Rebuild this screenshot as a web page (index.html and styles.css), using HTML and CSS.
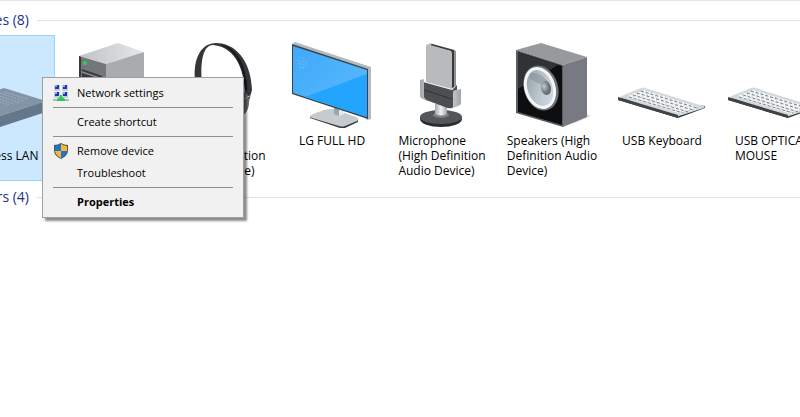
FILE: index.html
```
<!DOCTYPE html>
<html lang="en">
<head>
    <meta charset="UTF-8">
    <title>Devices and Printers</title>
    <link rel="stylesheet" href="styles.css">
</head>
<body>
    <main class="devices">
        <section class="group">
            <h2 class="group_title"><span>Devices (8)</span></h2>
            <ul class="device_list">
                <li class="device selected">
                    <svg viewBox="-51 36 106 96" aria-hidden="true">
                        <path fill="#8394a6" d="M4 88 46 101 0 116-42 103z"/>
                        <path fill="#65778a" d="M46 101v11L0 127v-11z"/>
                        <path fill="#596a7c" d="M-42 103 0 116v11l-42-13z"/>
                        <path stroke="#a0aebc" stroke-width="1" stroke-dasharray="2 1" d="M4 92l24 7M0 93l24 8M-3 95l23 8M-6 97l20 7M-9 99l18 6"/>
                    </svg>
                    <span class="device_name">USB<br>Wireless LAN</span>
                </li>
                <li class="device">
                    <svg viewBox="59 36 106 96" aria-hidden="true">
                        <defs>
                            <linearGradient id="caseTop" x1="0" x2="1"><stop offset="0" stop-color="#c0c1c3"/><stop offset="1" stop-color="#e6e7e8"/></linearGradient>
                        </defs>
                        <path fill="url(#caseTop)" d="M79 56 118 43 144 52 106 64z"/>
                        <path fill="#a9abad" d="M106 64 144 52v60l-38 14z"/>
                        <path fill="#74777a" d="M79 56l27 8v62l-27-10z"/>
                        <path fill="#37393c" d="M79 56l2 1v59l-2-1zM82 69l20 7v2l-20-7zM82 73l22 7v30l-22-8z"/>
                        <path stroke="#8a8c8e" d="M82 72l21 7"/>
                        <circle cx="85" cy="63" r="2" fill="#25d948"/>
                    </svg>
                    <span class="device_name">DESKTOP</span>
                </li>
                <li class="device">
                    <svg viewBox="169 36 106 96" aria-hidden="true">
                        <path fill="#34373a" d="M195 80C193 57 202 43 216 43c19 0 35 17 36 47l-3 11h-4c1-28-8-54-32-56-10 0-13 17-11 38z"/>
                        <path fill="#17191b" d="M219 45c15 3 25 20 26 45h2c0-25-11-45-28-45z"/>
                        <path fill="#6c6f72" d="M239 91c8-1 11 5 10 13-1 7-4 11-10 13z"/>
                        <path stroke="#c0c2c4" fill="none" d="M245 99c2-2 3-3 6-3"/>
                        <ellipse cx="199" cy="97" rx="6" ry="13" fill="#44474a"/>
                    </svg>
                    <span class="device_name">Headphone<br>(High Definition<br>Audio Device)</span>
                </li>
                <li class="device">
                    <svg viewBox="279 36 106 96" aria-hidden="true">
                        <defs>
                            <linearGradient id="screen" x1="0" y1="0" x2="1" y2="1"><stop offset="0" stop-color="#3fa9fa"/><stop offset="1" stop-color="#5dbafd"/></linearGradient>
                        </defs>
                        <path fill="#3b3f42" d="M310 116v2l30 10h5l13-6v-3z"/>
                        <path fill="#c6cbcf" d="M310 116q1-2 14-6 8-2 12 0l20 7q4 2 1 4l-12 5q-3 1-6 0l-27-8q-3-1-2-2z"/>
                        <path fill="#9fa4a8" d="M334 106h5v10l-5-2z"/>
                        <path fill="#e8e9ea" d="M339 108h5v6l-5 2z"/>
                        <path fill="#b3b9bc" d="M292 44l3-2 76 25v52l-4 1z"/>
                        <path fill="#35434e" d="M292 44l76 25v50l-76-25z"/>
                        <path fill="url(#screen)" d="M293 46l74 24v47l-74-24z"/>
                        <path fill="#23a5fd" d="M367 74v43l-62-20z"/>
                        <path stroke="#8fd0ff" stroke-width="1" stroke-dasharray="1 2" d="M299 57l6 2M297 60l10 3M298 63l9 3M300 67l5 1"/>
                    </svg>
                    <span class="device_name">LG FULL HD</span>
                </li>
                <li class="device">
                    <svg viewBox="389 36 106 96" aria-hidden="true">
                        <defs>
                            <linearGradient id="steel" x1="0" x2="1"><stop offset="0" stop-color="#a5a7a9"/><stop offset=".5" stop-color="#f1f2f2"/><stop offset="1" stop-color="#a2a4a6"/></linearGradient>
                        </defs>
                        <ellipse cx="441" cy="119" rx="21" ry="8" fill="#292c2e"/>
                        <ellipse cx="441" cy="117" rx="21" ry="7" fill="#53575a"/>
                        <ellipse cx="441" cy="115" rx="8" ry="3" fill="#7d8082"/>
                        <path fill="url(#steel)" d="M435 104h12v10q-6 3-12 0z"/>
                        <path fill="#c9cbcd" d="M426 45l4-2 25 7v5h-3z"/>
                        <path fill="#373a3c" d="M430 45l2-1 22 6v37l-3 2V51z"/>
                        <path fill="#8f9294" d="M454 50l2 1v35l-2 1z"/>
                        <path fill="#b8babc" d="M426 46q0-2 2-1l23 6q1 1 1 3v35l-26-7z"/>
                        <path fill="#4b4f52" d="M423 82l29 8 5-5v19l-5 4q-3 1-7-1l-19-7q-3-1-3-4z"/>
                        <path stroke="#303336" fill="none" d="M424 90l28 9"/>
                        <path fill="url(#steel)" d="M420 80l4-1v18l3 4-6-3q-1-1-1-4zM453 92q0-2 3-2l5-1v14q0 2-3 3l-5 2z"/>
                    </svg>
                    <span class="device_name">Microphone<br>(High Definition<br>Audio Device)</span>
                </li>
                <li class="device">
                    <svg viewBox="499 36 106 96" aria-hidden="true">
                        <defs>
                            <linearGradient id="cone" x1="0" y1="0" x2="1" y2="1"><stop offset="0" stop-color="#8c979f"/><stop offset=".5" stop-color="#b9c4cb"/><stop offset="1" stop-color="#dce3e8"/></linearGradient>
                            <radialGradient id="cap" cx=".35" cy=".35"><stop offset="0" stop-color="#c3ccd3"/><stop offset="1" stop-color="#657078"/></radialGradient>
                        </defs>
                        <path fill="#e3e3e4" d="M587 113l4 3-20 9z"/>
                        <path fill="#97999d" d="M516 50 541 43 587 57 563 65z"/>
                        <path fill="#777a82" d="M563 65 587 57v60l-24 10z"/>
                        <path fill="#5a5d62" d="M516 50l47 15v62l-47-14z"/>
                        <path fill="#0d0e10" d="M518 52l44 14v59l-44-13z"/>
                        <path fill="#303235" d="M518 52l40 13-40 24z"/>
                        <ellipse cx="541" cy="88" rx="17" ry="23" fill="#6e7276" transform="rotate(-18 541 88)"/>
                        <ellipse cx="540" cy="88" rx="14" ry="20" fill="url(#cone)" stroke="#f3f5f6" stroke-width="3" transform="rotate(-18 540 88)"/>
                        <path fill="#7f8b94" opacity=".5" d="M530 73q10-2 19 10l-7 2-12-6z"/>
                        <ellipse cx="546" cy="88" rx="5" ry="7" fill="url(#cap)" transform="rotate(-14 546 88)"/>
                    </svg>
                    <span class="device_name">Speakers (High<br>Definition Audio<br>Device)</span>
                </li>
                <li class="device">
                    <svg viewBox="609 36 106 96" aria-hidden="true">
                        <g id="keyboard">
                            <path fill="#2f3437" d="M618 98v2l60 18 27-10v-2z"/>
                            <path fill="#d3d8db" d="M619 97l22-9q2-1 4 0l58 18q3 1 1 2l-25 8q-2 1-4 0z"/>
                            <path fill="#3d4347" d="M618 97l60 18v3l-60-18z"/>
                            <path stroke="#f5f6f7" stroke-width="3" stroke-dasharray="4 1" d="M642 91l54 17M638 93l54 17M633 94l54 17M629 96l54 17"/>
                            <path stroke="#777e84" stroke-width="1" stroke-dasharray="3 2" d="M641 91l56 17M637 93l56 17M633 95l55 17M629 97l54 16"/>
                        </g>
                    </svg>
                    <span class="device_name">USB Keyboard</span>
                </li>
                <li class="device">
                    <svg viewBox="609 36 106 96" aria-hidden="true"><use href="#keyboard"/></svg>
                    <span class="device_name">USB OPTICAL<br>MOUSE</span>
                </li>
            </ul>
        </section>
        <section class="group">
            <h2 class="group_title"><span>Printers (4)</span></h2>
        </section>
    </main>

    <div class="menu" role="menu">
        <button class="menu_item" role="menuitem">
            <svg viewBox="0 0 16 18" aria-hidden="true">
                <path fill="#c9ccd3" d="M1 1h6v6H1zM9 1h6v6H9zM1 8h6v6H1zM9 8h6v6H9z"/>
                <path fill="#1b36b8" d="M2 1h4v4H2zM10 1h4v4h-4zM2 8h4v4H2zM10 8h4v4h-4z"/>
                <path fill="#8ea8f4" d="M2 1h2v2H2zM10 1h2v2h-2zM2 8h2v2H2zM10 8h2v2h-2z"/>
                <path fill="#b5b8bb" d="M0 15h16v2H0z"/>
                <path fill="#21ce5b" d="M7 11h2v2l3 2v2H4v-2l3-2z"/>
            </svg>
            Network settings
        </button>
        <hr>
        <button class="menu_item" role="menuitem">Create shortcut</button>
        <hr>
        <button class="menu_item" role="menuitem">
            <svg viewBox="0 0 16 18" aria-hidden="true">
                <path fill="#4e565d" d="M8 1q3 2 7 2v5q0 6-7 9Q1 14 1 8V3q4 0 7-2z"/>
                <path fill="#1877d2" d="M8 2v7H2V4q3 0 6-2zM8 9h6q-1 5-6 7z"/>
                <path fill="#fdb827" d="M8 2q3 2 6 2v5H8zM2 9h6v7q-5-2-6-7z"/>
            </svg>
            Remove device
        </button>
        <button class="menu_item" role="menuitem">Troubleshoot</button>
        <hr>
        <button class="menu_item default" role="menuitem">Properties</button>
    </div>
</body>
</html>
```
FILE: styles.css
```
body {
    margin: 0;
    background-color: white;
    border-top: 1px solid #e5e5e5;
    font-family: "Open Sans", "Noto Sans", sans-serif;
    font-size: 12px;
    color: black;
    overflow: hidden;
}
/* list is scrolled to the right, so it starts outside the window */
.devices {
    margin-left: -51px;
    padding-top: 3px;
}
.group_title {
    display: flex;
    align-items: center;
    gap: 8px;
    margin: 0;
    height: 31px;
    padding-top: 2px;
    box-sizing: border-box;
    font-size: 14px;
    font-weight: normal;
    line-height: 20px;
    color: #1e3287;
}
.group_title span {
    min-width: 80px;
    padding-bottom: 2px;
    text-align: right;
}
.group_title::after {
    content: "";
    flex: 1;
    height: 1px;
    background-color: #e2e2e2;
}
.device_list {
    display: flex;
    gap: 4px;
    margin: 0;
    padding: 0;
    list-style: none;
}
.device {
    display: flex;
    flex-direction: column;
    align-items: center;
    flex: none;
    box-sizing: border-box;
    width: 106px;
    min-height: 146px;
    padding-top: 1px;
}
.device.selected {
    padding-top: 0;
    border: 1px solid #99d1ff;
    background-color: #cce8ff;
}
.device svg {
    width: 106px;
    height: 96px;
    fill: none;
}
.device_name {
    margin-top: 1px;
    line-height: 15px;
    white-space: nowrap;
}
.menu {
    position: absolute;
    left: 42px;
    top: 77px;
    box-sizing: border-box;
    width: 202px;
    padding: 4px 0;
    border: 1px solid #a0a0a0;
    background-color: #f1f1f1;
    box-shadow: 3px 3px 2px rgba(0, 0, 0, 0.45);
    font-size: 11px;
}
.menu_item {
    display: flex;
    align-items: center;
    position: relative;
    width: 100%;
    height: 22px;
    padding: 0 10px 2px 34px;
    border: none;
    background: none;
    font: inherit;
    color: inherit;
    text-align: left;
}
.menu_item svg {
    position: absolute;
    left: 10px;
    top: 2px;
    width: 16px;
    height: 18px;
}
.menu_item.default {
    font-weight: bold;
}
.menu hr {
    height: 1px;
    margin: 3px 10px;
    border: none;
    background-color: #919191;
}
```
